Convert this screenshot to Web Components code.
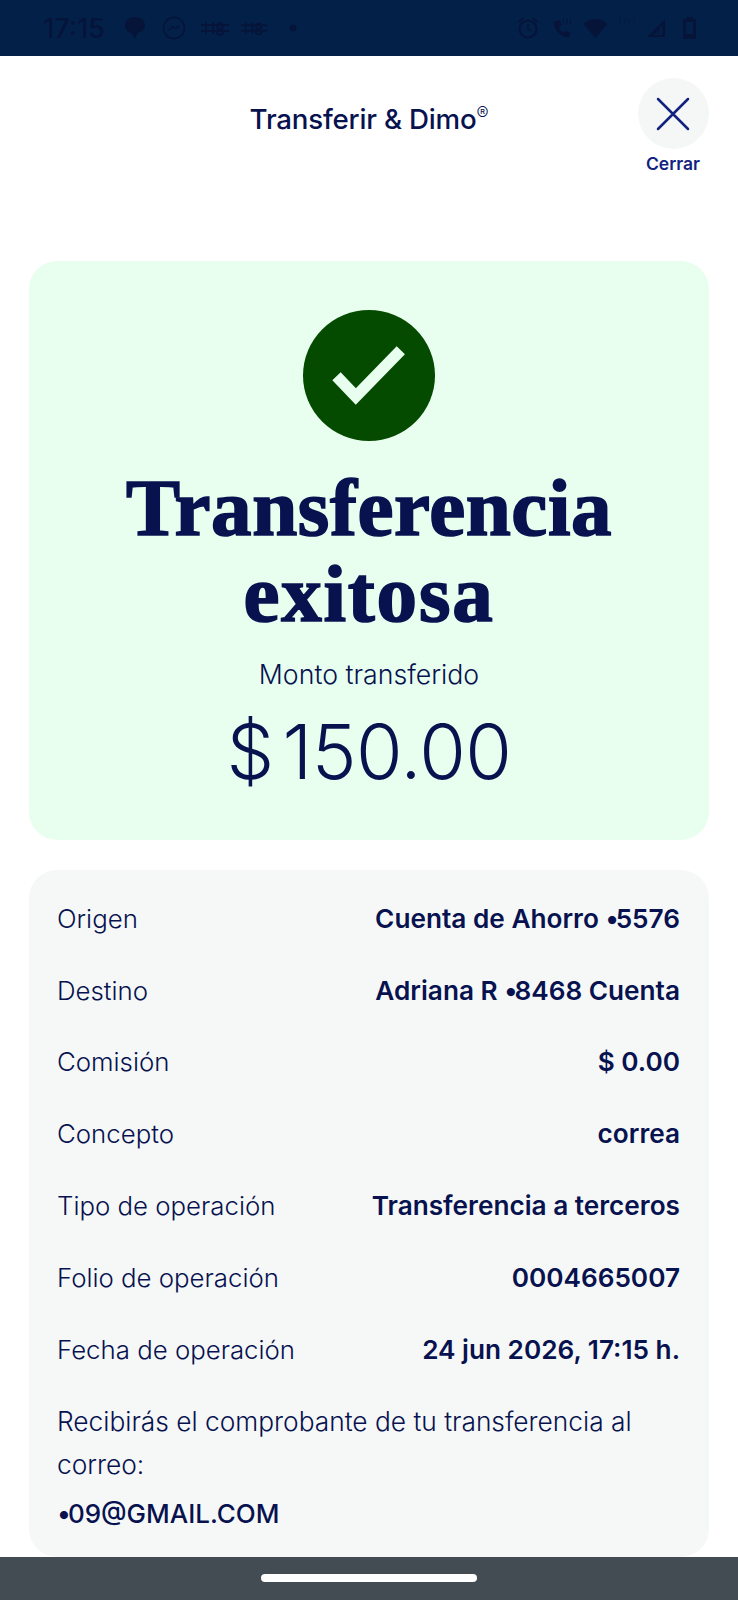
<!DOCTYPE html>
<html lang="es">
<head>
<meta charset="utf-8">
<title>Transferencia exitosa</title>
<style>
  html, body { margin: 0; padding: 0; background: #fff; }
  body { width: 738px; height: 1600px; overflow: hidden; font-family: "Inter", "Liberation Sans", sans-serif; color: #07124f; }
  .screen { display: flex; flex-direction: column; height: 1600px; }
  .content { flex: 1; display: flex; flex-direction: column; gap: 30px; padding: 0 29px; min-height: 0; }
</style>
</head>
<body>
<template id="status-tpl">
  <style>
    :host { display: flex; align-items: center; height: 56px; flex: none; background: #032049; color: #06143a; padding: 0 41px 0 43px; box-sizing: border-box; }
    .time { font: 500 27px "Inter", sans-serif; width: 82px; filter: blur(.6px); }
    .left, .right { display: flex; align-items: center; filter: blur(.5px); }
    .right { margin-left: auto; }
    svg { display: block; }
  </style>
  <span class="time">17:15</span>
  <div class="left">
    <svg width="20" height="22" viewBox="0 0 20 22" fill="currentColor" style="margin-right:17px"><path d="M10 0C4.500 0 0 3.300 0 8.500c0 4 2.600 7 6.500 7.700L10 22l2.500-6C16.500 15 20 12.500 20 8.500 20 3.300 15.500 0 10 0z"/></svg>
    <svg width="24" height="24" viewBox="0 0 24 24" fill="none" stroke="currentColor" stroke-width="1.600" style="margin-right:14px"><circle cx="12" cy="12" r="10.500"/><path d="M6.500 14.500l4-4 3 2.500 4-3.500"/></svg>
    <svg width="30" height="16" viewBox="0 0 30 16" fill="none" stroke="currentColor" stroke-width="2" style="margin-right:10px"><path d="M1 5h28M1 11h28M6 2v12M13 2v12M20 3a3 3 0 1 0 .1 0zM20 9a3 3 0 1 0 .1 0z"/></svg>
    <svg width="28" height="16" viewBox="0 0 30 16" fill="none" stroke="currentColor" stroke-width="2" style="margin-right:21px"><path d="M1 5h28M1 11h28M6 2v12M13 2v12M20 3a3 3 0 1 0 .1 0zM20 9a3 3 0 1 0 .1 0z"/></svg>
    <svg width="8" height="8" viewBox="0 0 8 8" fill="currentColor"><circle cx="4" cy="4" r="3.500"/></svg>
  </div>
  <div class="right">
    <svg width="22" height="24" viewBox="0 0 22 24" fill="none" stroke="currentColor" stroke-width="2" style="margin-right:12px"><circle cx="11" cy="13" r="8.500"/><path d="M11 8v5l3 2M2 6l4-4M20 6l-4-4"/></svg>
    <svg width="23" height="24" viewBox="0 0 26 26" fill="currentColor" style="margin-right:8px"><path d="M3 6c0 9 7 17 17 18l2-5-5-3-3 2c-2-1-4-3-5-6l3-2-2-6z"/><path d="M14 2v7M18 2v7M22 2v7" stroke="currentColor" stroke-width="1.500" opacity=".6"/></svg>
    <svg width="27" height="20" viewBox="0 0 26 20" fill="currentColor" style="margin-right:8px"><path d="M1 6c3-3 7-5 12-5s9 2 12 5L13 20z"/></svg>
    <svg width="23" height="24" viewBox="0 0 22 26" fill="none" stroke="currentColor" stroke-width="1.400" opacity=".35" style="margin-right:6px"><path d="M2 8V3M7 8V3M12 8V3M17 8V3"/></svg>
    <svg width="20" height="20" viewBox="0 0 20 20" fill="currentColor" style="margin-right:16px"><path d="M19 1v18H1zM16 7l-9 10h9z" fill-rule="evenodd"/><path d="M14 9l-6 7h6z" opacity=".6"/></svg>
    <svg width="15" height="24" viewBox="0 0 15 24" fill="currentColor"><path d="M4 1h7v2h3v20H1V3h3zM4 6v12h7V6z" fill-rule="evenodd"/></svg>
  </div>
</template>

<template id="header-tpl">
  <style>
    :host { display: block; flex: none; height: 205px; box-sizing: border-box; padding-top: 24px; position: relative; }
    h1 { margin: 0; padding-top: 23px; text-align: center; font: 500 27.700px/32px "Inter", sans-serif; color: #07124f; letter-spacing: -.2px; }
    sup { font-size: 18px; line-height: 0; vertical-align: 9px; font-weight: 300; }
    .close { position: absolute; top: 22px; right: 0; width: 72px; display: flex; flex-direction: column; align-items: center; gap: 5px; font: 600 17.500px/20px "Inter", sans-serif; color: #12237f; }
    .circle { width: 71px; height: 71px; border-radius: 50%; background: #f5f7f7; display: flex; align-items: center; justify-content: center; }
  </style>
  <h1><slot></slot><sup>®</sup></h1>
  <div class="close">
    <span class="circle"><svg width="36" height="36" viewBox="0 0 36 36" stroke="#12237f" stroke-width="2.500" stroke-linecap="round"><path d="M3 3l30 30M33 3L3 33"/></svg></span>
    <span>Cerrar</span>
  </div>
</template>

<template id="success-tpl">
  <style>
    :host { display: flex; flex-direction: column; align-items: center; flex: none; height: 579px; box-sizing: border-box; padding-top: 49px; background: #e8fff0; border-radius: 28px; color: #07124f; }
    .check { width: 132px; height: 131px; border-radius: 50%; background: #044b00; display: block; margin-left: -1px; }
    .check svg { display: block; }
    h2 { margin: 24px 0 0; text-align: center; font: 700 81px/86px "Liberation Serif", serif; -webkit-text-stroke: 1.700px #07124f; letter-spacing: .6px; width: 620px; }
    .label { margin-top: 20px; font: 300 26.700px/34px "Inter", sans-serif; }
    .amount { margin-top: 18px; font: 300 75.500px/86px "Inter", sans-serif; letter-spacing: -.5px; word-spacing: -12px; }
  </style>
  <span class="check"><svg width="132" height="131" viewBox="0 0 132 131" fill="none" stroke="#e8fff0" stroke-width="11.500"><path d="M33.500 66.200l19.300 20.300 45-46.300"/></svg></span>
  <h2><slot name="title"></slot></h2>
  <div class="label"><slot name="label"></slot></div>
  <div class="amount"><slot name="amount"></slot></div>
</template>

<template id="details-tpl">
  <style>
    :host { display: block; flex: 1; min-height: 0; box-sizing: border-box; background: #f6f8f8; border-radius: 28px; padding: 13px 29px 0 28px; }
    .rows { display: flex; flex-direction: column; }
    .note { font: 300 26.300px/43px "Inter", sans-serif; color: #07124f; padding-top: 14px; }
    .mail { font: 500 26px/43px "Inter", sans-serif; color: #07124f; margin-top: 6px; }
  </style>
  <div class="rows"><slot></slot></div>
  <div class="note"><slot name="note"></slot></div>
  <div class="mail"><slot name="mail"></slot></div>
</template>

<template id="row-tpl">
  <style>
    :host { display: flex; justify-content: space-between; align-items: center; height: 71.800px; font: 300 25.800px/34px "Inter", sans-serif; color: #07124f; }
    b { font-weight: 600; font-size: 26.200px; }
  </style>
  <span><slot></slot></span>
  <b></b>
</template>

<template id="nav-tpl">
  <style>
    :host { display: flex; align-items: center; justify-content: center; flex: none; height: 43px; background: #434c52; }
    i { display: block; width: 216px; height: 8px; border-radius: 4px; background: #fff; margin-top: -2px; }
  </style>
  <i></i>
</template>

<div class="screen">
  <status-bar></status-bar>
  <div class="content">
    <app-header style="margin-bottom:-30px">Transferir &amp; Dimo</app-header>
    <success-card>
      <span slot="title">Transferencia <span style="letter-spacing:1.800px">exitosa</span></span>
      <span slot="label">Monto transferido</span>
      <span slot="amount">$ 150.00</span>
    </success-card>
    <detail-card>
      <detail-row value="Cuenta de Ahorro •5576">Origen</detail-row>
      <detail-row value="Adriana R •8468 Cuenta">Destino</detail-row>
      <detail-row value="$ 0.00">Comisión</detail-row>
      <detail-row value="correa">Concepto</detail-row>
      <detail-row value="Transferencia a terceros">Tipo de operación</detail-row>
      <detail-row value="0004665007">Folio de operación</detail-row>
      <detail-row value="24 jun 2026, 17:15 h.">Fecha de operación</detail-row>
      <span slot="note">Recibirás el comprobante de tu transferencia al correo:</span>
      <span slot="mail"><span style="letter-spacing:-3px">•</span>09@GMAIL.COM</span>
    </detail-card>
  </div>
  <nav-bar></nav-bar>
</div>

<script>
function fromTemplate(id) {
  return class extends HTMLElement {
    constructor() {
      super();
      this.attachShadow({ mode: "open" });
      this.shadowRoot.appendChild(document.getElementById(id).content.cloneNode(true));
    }
  };
}
customElements.define("status-bar", fromTemplate("status-tpl"));
customElements.define("app-header", fromTemplate("header-tpl"));
customElements.define("success-card", fromTemplate("success-tpl"));
customElements.define("detail-card", fromTemplate("details-tpl"));
customElements.define("nav-bar", fromTemplate("nav-tpl"));

class DetailRow extends fromTemplate("row-tpl") {
  connectedCallback() {
    const b = this.shadowRoot.querySelector("b");
    // the bullet sits tight against the digits in the app
    const [before, after] = this.getAttribute("value").split("•");
    b.textContent = before;
    if (after !== undefined) {
      const dot = document.createElement("span");
      dot.style.letterSpacing = "-3px";
      dot.textContent = "•";
      b.append(dot, after);
    }
  }
}
customElements.define("detail-row", DetailRow);
</script>
</body>
</html>
